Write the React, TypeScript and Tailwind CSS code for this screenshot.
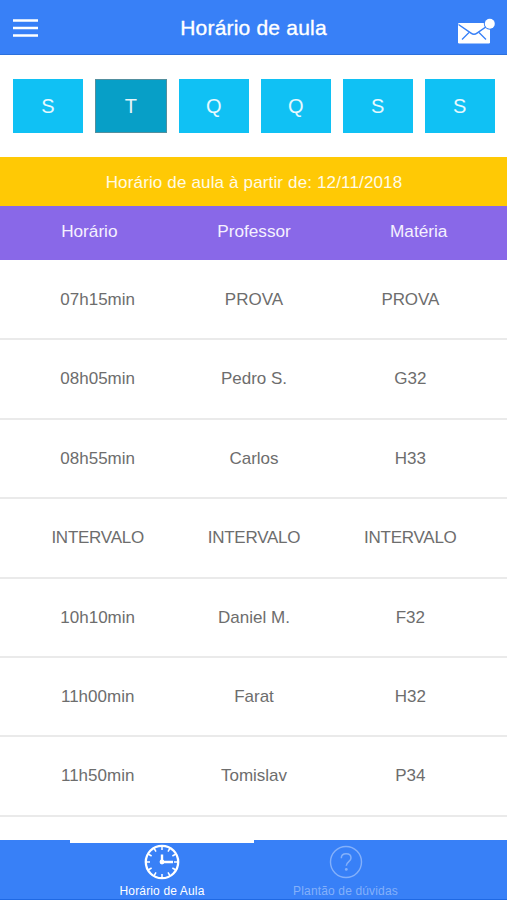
const days = ['S', 'T', 'Q', 'Q', 'S', 'S'];

const rows = [
  ['07h15min', 'PROVA', 'PROVA'],
  ['08h05min', 'Pedro S.', 'G32'],
  ['08h55min', 'Carlos', 'H33'],
  ['INTERVALO', 'INTERVALO', 'INTERVALO'],
  ['10h10min', 'Daniel M.', 'F32'],
  ['11h00min', 'Farat', 'H32'],
  ['11h50min', 'Tomislav', 'P34'],
];

const ticks = [0, 30, 60, 90, 120, 150, 180, 210, 240, 270, 300, 330];

function MenuIcon() {
  return (
    <svg width="25" height="18" viewBox="0 0 25 18" stroke="#fff" strokeWidth="2.5" aria-hidden="true">
      <path d="M0 1.4H25M0 9H25M0 16.6H25" />
    </svg>
  );
}

function MailIcon() {
  return (
    <svg width="38" height="26" viewBox="0 0 38 26" fill="none" aria-hidden="true">
      <rect x="1" y="5" width="32" height="20.5" rx="1.2" fill="#fff" />
      <path d="M1.5 6.5 14 15.2Q17 17.4 20 15.2L29.5 8.5" stroke="#3880f7" strokeWidth="1.5" />
      <path d="M5 21.5 12 14.5M29 21.5 22 14.5" stroke="#3880f7" strokeWidth="1.3" />
      <circle cx="32.8" cy="5.8" r="6" fill="#3880f7" />
      <circle cx="32.8" cy="5.8" r="5" fill="#fff" />
    </svg>
  );
}

function ClockIcon() {
  return (
    <svg width="36" height="36" viewBox="0 0 36 36" fill="none" stroke="#fff" aria-hidden="true">
      <circle cx="18" cy="18" r="16.2" strokeWidth="2.3" />
      {ticks.map((a) => (
        <path key={a} d="M18 2v4" strokeWidth="1.5" transform={`rotate(${a} 18 18)`} />
      ))}
      <path d="M18 10.5V18H29" strokeWidth="2.4" />
      <circle cx="18" cy="18" r="2.4" fill="#fff" stroke="none" />
    </svg>
  );
}

function HelpIcon() {
  return (
    <svg width="36" height="36" viewBox="0 0 36 36" fill="none" stroke="#84b0fa" aria-hidden="true">
      <circle cx="18" cy="18" r="15.5" strokeWidth="1.4" />
      <path d="M13.3 14.2C13.3 11.3 15.2 9.8 18.1 9.8C21 9.8 23 11.5 23 14C23 17.7 18.3 17.5 18.3 21.8" strokeWidth="1.5" />
      <circle cx="18.3" cy="25.4" r="1.4" fill="#84b0fa" stroke="none" />
    </svg>
  );
}

export default function App() {
  return (
    <div className="flex h-[900px] w-[507px] flex-col overflow-hidden bg-white font-['Liberation_Sans',Arial,sans-serif]">
      <header className="grid h-[55px] shrink-0 grid-cols-[1fr_auto_1fr] items-center border-b border-[#2c70dc] bg-[#3880f7] px-[13px] pt-[2px] text-white">
        <button aria-label="Menu" className="justify-self-start">
          <MenuIcon />
        </button>
        <h1 className="text-[21px] leading-6 tracking-[0.2px] [-webkit-text-stroke:0.35px_white]">Horário de aula</h1>
        <button aria-label="Mensagens" className="-mr-[1px] justify-self-end pt-[5px]">
          <MailIcon />
        </button>
      </header>

      <nav className="flex h-[102px] shrink-0 gap-[12.2px] pl-[13px] pr-[12.5px] pt-[24px]">
        {days.map((day, i) => (
          <button
            key={i}
            className={
              i === 1
                ? 'h-[54px] flex-1 border border-[#528f9e] bg-[#079fc7] text-xl text-white/90'
                : 'h-[54px] flex-1 bg-[#10c1f4] text-xl text-white/90'
            }
          >
            {day}
          </button>
        ))}
      </nav>

      <div className="flex h-[49px] shrink-0 items-center justify-center bg-[#ffc905] pl-[1px] pt-[2px] text-[17px] tracking-[0.15px] text-[#fffbe5]">
        Horário de aula à partir de: 12/11/2018
      </div>

      <div className="grid h-[54px] shrink-0 grid-cols-3 bg-[#8968e8] pl-[7px] pr-[6px] pt-[13px] text-center text-[17.2px] leading-6 text-[#f5f1ff]">
        <span>Horário</span>
        <span>Professor</span>
        <span>Matéria</span>
      </div>

      <main className="min-h-0 flex-1 pt-[1.1px]">
        {rows.map(([time, teacher, subject]) => (
          <div
            key={time}
            className={`grid h-[79.4px] grid-cols-3 items-center border-b-2 border-[#eaeaea] pl-[19.5px] pr-[18.5px] text-center text-[17px] text-[#6d6d6d] ${time === 'INTERVALO' ? 'tracking-[-0.25px]' : ''}`}
          >
            <span>{time}</span>
            <span>{teacher}</span>
            <span className={subject === 'PROVA' ? 'tracking-[-0.1px]' : ''}>{subject}</span>
          </div>
        ))}
      </main>

      <footer className="flex h-[60px] shrink-0 border-b border-[#1f69e4] bg-[#3880f7] pl-[70px] text-[12px] leading-[14px] tracking-[0.15px]">
        <button className="flex w-[184px] flex-col items-center border-t-[3px] border-white pt-[1px] text-white">
          <ClockIcon />
          <span className="mt-[4px]">Horário de Aula</span>
        </button>
        <button className="flex w-[183px] flex-col items-center pt-[4px] text-[#84b0fa]">
          <HelpIcon />
          <span className="mt-[4px]">Plantão de dúvidas</span>
        </button>
      </footer>
    </div>
  );
}
